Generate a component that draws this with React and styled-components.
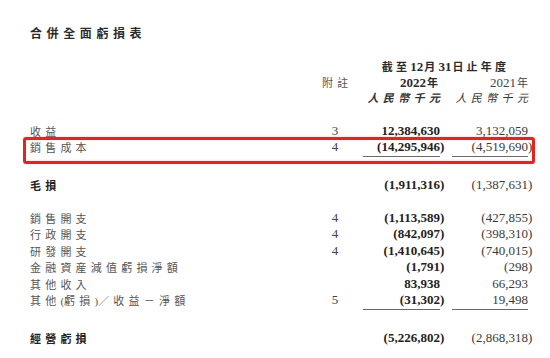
import React from "react";
import styled, { createGlobalStyle } from "styled-components";

const GlobalStyle = createGlobalStyle`
  html, body {
    margin: 0;
    padding: 0;
    background: #ffffff;
  }
  body {
    font-family: "Liberation Serif", "Noto Sans CJK TC", serif;
    color: #333;
  }
`;

const CJK = `"Noto Sans CJK TC", "Noto Sans CJK SC", sans-serif`;
const SERIF = `"Liberation Serif", "Noto Sans CJK TC", serif`;

const rows = [
  { label: "收益", note: "3", cur: "12,384,630", prev: "3,132,059" },
  { label: "銷售成本", note: "4", cur: "(14,295,946)", prev: "(4,519,690)", line: true, marked: true },
  { label: "毛損", cur: "(1,911,316)", prev: "(1,387,631)", strong: true, space: 21 },
  { label: "銷售開支", note: "4", cur: "(1,113,589)", prev: "(427,855)", space: 16.5 },
  { label: "行政開支", note: "4", cur: "(842,097)", prev: "(398,310)" },
  { label: "研發開支", note: "4", cur: "(1,410,645)", prev: "(740,015)" },
  { label: "金融資産減值虧損淨額", cur: "(1,791)", prev: "(298)" },
  { label: "其他收入", cur: "83,938", prev: "66,293" },
  { label: "其他(虧損)／收益－淨額", note: "5", cur: "(31,302)", prev: "19,498", line: true },
  { label: "經營虧損", cur: "(5,226,802)", prev: "(2,868,318)", strong: true, space: 21 },
];

export default function App() {
  return (
    <>
      <GlobalStyle />
      <Page>
        <Title>合併全面虧損表</Title>

        <Header>
          <HeadRow>
            <Period>
              截至<Digits>12</Digits>月<Digits>31</Digits>日止年度
            </Period>
          </HeadRow>
          <HeadRow>
            <span />
            <NoteHead>附註</NoteHead>
            <YearCell $cur>
              <Digits>2022</Digits>年
            </YearCell>
            <YearCell>
              <Digits $light>2021</Digits>年
            </YearCell>
          </HeadRow>
          <HeadRow>
            <span />
            <span />
            <UnitCell $cur>人民幣千元</UnitCell>
            <UnitCell>人民幣千元</UnitCell>
          </HeadRow>
        </Header>

        <Table>
          {rows.map((r) => (
            <Row key={r.label} $space={r.space || 0}>
              <Label $strong={r.strong}>
                <LabelText text={r.label} />
              </Label>
              <Note>{r.note || ""}</Note>
              <ValueCell $cur>
                <Num $bold $line={r.line}>
                  <Amount v={r.cur} />
                </Num>
              </ValueCell>
              <ValueCell>
                <Num $line={r.line}>
                  <Amount v={r.prev} />
                </Num>
              </ValueCell>
              {r.marked && <Marker />}
            </Row>
          ))}
        </Table>
      </Page>
    </>
  );
}

// ascii brackets in labels are set narrow, like the printed report
function LabelText({ text }) {
  return text
    .split(/([()])/)
    .map((part, i) =>
      part === "(" || part === ")" ? <Narrow key={i}>{part}</Narrow> : part
    );
}

function Amount({ v }) {
  if (v.endsWith(")")) {
    return (
      <>
        {v.slice(0, -1)}
        <Paren>)</Paren>
      </>
    );
  }
  return v;
}

const Page = styled.div`
  width: 550px;
  height: 358px;
  box-sizing: border-box;
  padding: 24px 0 0 30px;
  overflow: hidden;
`;

const Title = styled.h1`
  margin: 0;
  font-family: ${CJK};
  font-size: 12px;
  line-height: 17px;
  font-weight: 700;
  letter-spacing: 4.6px;
  color: #2b2b2b;
`;

const Header = styled.div`
  margin-top: 18px;
`;

const HeadRow = styled.div`
  display: grid;
  grid-template-columns: 290px 30px 90px 88px;
  grid-auto-rows: 15.5px;
  line-height: 15.5px;
  align-items: center;
`;

const Period = styled.div`
  grid-column: 3 / 5;
  padding-left: 13px;
  text-align: center;
  font-family: ${CJK};
  font-size: 11px;
  font-weight: 700;
  letter-spacing: 3.2px;
  color: #2b2b2b;
  white-space: nowrap;
`;

const Digits = styled.span`
  font-family: ${SERIF};
  font-size: 13px;
  font-weight: ${(p) => (p.$light ? 400 : 700)};
  letter-spacing: 0;
  margin-right: 1px;
`;

const NoteHead = styled.div`
  text-align: center;
  font-family: ${CJK};
  font-size: 11px;
  letter-spacing: 4px;
  margin-right: -4px;
  color: #555;
  white-space: nowrap;
`;

const YearCell = styled.div`
  text-align: right;
  font-family: ${CJK};
  font-size: 11px;
  font-weight: ${(p) => (p.$cur ? 700 : 400)};
  color: ${(p) => (p.$cur ? "#2b2b2b" : "#444")};
  padding-right: ${(p) => (p.$cur ? "2px" : "0")};
  white-space: nowrap;
`;

const UnitCell = styled.div`
  text-align: right;
  font-family: ${CJK};
  font-size: 11px;
  font-style: italic;
  font-weight: ${(p) => (p.$cur ? 700 : 400)};
  letter-spacing: 4.4px;
  margin-right: -4.4px;
  color: #333;
  white-space: nowrap;
`;

const Table = styled.div`
  margin-top: 17px;
`;

const Row = styled.div`
  position: relative;
  display: grid;
  grid-template-columns: 290px 30px 90px 88px;
  grid-template-rows: 16.5px;
  margin-top: ${(p) => p.$space}px;
  line-height: 16.5px;
`;

const Label = styled.div`
  font-family: ${CJK};
  font-size: 11px;
  letter-spacing: 4.2px;
  font-weight: ${(p) => (p.$strong ? 700 : 400)};
  color: ${(p) => (p.$strong ? "#222" : "#555")};
  white-space: nowrap;
`;

const Narrow = styled.span`
  font-family: ${SERIF};
  font-size: 11px;
  letter-spacing: 0;
`;

const Note = styled.div`
  text-align: center;
  font-family: ${SERIF};
  font-size: 13px;
  color: #444;
`;

const ValueCell = styled.div`
  padding-left: ${(p) => (p.$cur ? "13px" : "12px")};
  width: ${(p) => (p.$cur ? "77px" : "76px")};
`;

const Num = styled.div`
  height: 16.5px;
  text-align: right;
  font-family: ${SERIF};
  font-size: 13px;
  font-weight: ${(p) => (p.$bold ? 700 : 400)};
  color: ${(p) => (p.$bold ? "#222" : "#3a3a3a")};
  border-bottom: 1px solid ${(p) => (p.$line ? "#6a6a6a" : "transparent")};
  white-space: nowrap;
`;

const Paren = styled.span`
  margin-right: -4.3px;
`;

const Marker = styled.div`
  position: absolute;
  left: -7px;
  top: -2px;
  width: 512px;
  height: 27px;
  box-sizing: border-box;
  border: 3px solid #e8231f;
  border-radius: 3px;
  pointer-events: none;
`;
